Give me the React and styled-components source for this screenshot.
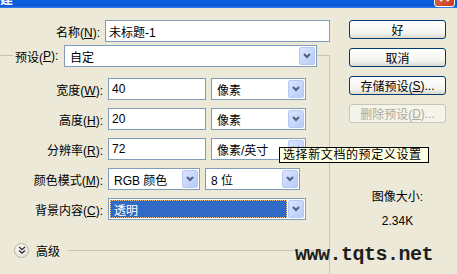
import React from 'react';
import styled, { createGlobalStyle } from 'styled-components';

const GlobalStyle = createGlobalStyle`
    html, body {
        margin: 0;
        padding: 0;
        background: #ece9d8;
    }
`;

const cjk = `"Liberation Sans", "Noto Sans CJK SC", sans-serif`;
const lineColor = '#c8c5b4';

const Chevron = () => (
    <svg width="8" height="6" viewBox="0 0 8 6">
        <polyline points="1,1 4,4 7,1" fill="none" stroke="#4d6185" strokeWidth="2" />
    </svg>
);

const DoubleChevron = () => (
    <svg width="8" height="8" viewBox="0 0 8 8">
        <polyline points="1,1 4,3.5 7,1" fill="none" stroke="#333" strokeWidth="1.4" />
        <polyline points="1,4.5 4,7 7,4.5" fill="none" stroke="#333" strokeWidth="1.4" />
    </svg>
);

const Select = ({ width, value, selected }) => (
    <StyledSelect width={width}>
        <SelectValue selected={selected}>{value}</SelectValue>
        <DropButton><Chevron /></DropButton>
    </StyledSelect>
);

const FieldRow = ({ label, children }) => (
    <Row>
        <Label>{label}</Label>
        {children}
    </Row>
);

const App = () => {
    return (
        <Window>
            <GlobalStyle />
            <TitleBar>
                <TitleText>新建</TitleText>
                <CloseButton>×</CloseButton>
            </TitleBar>
            <Body>
                <FormColumn>
                    <FieldRow label={<>名称(<u>N</u>):</>}>
                        <TextInput width={225}>未标题-1</TextInput>
                    </FieldRow>
                    <PresetRow>
                        <GroupEdge width={13} />
                        <PresetLabel>预设(<u>P</u>):</PresetLabel>
                        <Select width={253} value="自定" />
                        <GroupEdge corner />
                    </PresetRow>
                    <Group>
                        <FieldRow label={<>宽度(<u>W</u>):</>}>
                            <TextInput width={98}>40</TextInput>
                            <Select width={95} value="像素" />
                        </FieldRow>
                        <FieldRow label={<>高度(<u>H</u>):</>}>
                            <TextInput width={98}>20</TextInput>
                            <Select width={95} value="像素" />
                        </FieldRow>
                        <FieldRow label={<>分辨率(<u>R</u>):</>}>
                            <TextInput width={98}>72</TextInput>
                            <Select width={95} value="像素/英寸" />
                        </FieldRow>
                        <FieldRow label={<>颜色模式(<u>M</u>):</>}>
                            <Select width={92} value="RGB 颜色" />
                            <Select width={95} value="8 位" />
                        </FieldRow>
                        <FieldRow label={<>背景内容(<u>C</u>):</>}>
                            <Select width={198} value="透明" selected />
                        </FieldRow>
                        <AdvancedRow>
                            <RoundToggle><DoubleChevron /></RoundToggle>
                            <span>高级</span>
                            <Rule />
                        </AdvancedRow>
                    </Group>
                </FormColumn>
                <SideColumn>
                    <Button>好</Button>
                    <Button>取消</Button>
                    <Button>存储预设(<u>S</u>)...</Button>
                    <Button disabled>删除预设(<u>D</u>)...</Button>
                    <InfoLabel>图像大小:</InfoLabel>
                    <InfoValue>2.34K</InfoValue>
                </SideColumn>
            </Body>
            <Tooltip>选择新文档的预定义设置</Tooltip>
            <Watermark>www.tqts.net</Watermark>
        </Window>
    );
};

export default App;

const Window = styled.div`
    position: relative;
    width: 457px;
    height: 274px;
    overflow: hidden;
    background: #ece9d8;
    font-family: ${cjk};
    font-size: 12px;
    color: #000;
    display: flex;
    flex-direction: column;
`;

const TitleBar = styled.div`
    height: 8px;
    flex: none;
    display: flex;
    align-items: flex-end;
    justify-content: space-between;
    overflow: hidden;
    background: linear-gradient(#0a5fe0, #0a56d6 75%, #3d86f0);
`;

const TitleText = styled.span`
    color: #fff;
    font-weight: bold;
    font-size: 13px;
    line-height: 13px;
    margin-left: -13px;
    margin-bottom: 3px;
`;

const CloseButton = styled.div`
    width: 21px;
    height: 21px;
    margin-right: 2px;
    margin-bottom: 1px;
    flex: none;
    border-radius: 3px;
    border: 1px solid #fff;
    box-sizing: border-box;
    background: linear-gradient(135deg, #e8795a, #c8381a);
    color: #fff;
    font: bold 16px/19px "DejaVu Sans", sans-serif;
    text-align: center;
`;

const Body = styled.div`
    flex: 1;
    display: grid;
    grid-template-columns: 330px 1fr;
`;

const FormColumn = styled.div`
    display: flex;
    flex-direction: column;
    padding-top: 12px;
`;

const Row = styled.div`
    display: flex;
    align-items: center;
    height: 22px;
    gap: 5px;
`;

const Label = styled.div`
    width: 103px;
    text-align: right;
    white-space: nowrap;
`;

const TextInput = styled.div`
    width: ${props => props.width}px;
    height: 22px;
    box-sizing: border-box;
    border: 1px solid #7f9db9;
    background: #fff;
    padding-left: 3px;
    display: flex;
    align-items: center;
    flex: none;
`;

const StyledSelect = styled.div`
    width: ${props => props.width}px;
    height: 22px;
    box-sizing: border-box;
    border: 1px solid #7f9db9;
    background: #fff;
    padding: 1px;
    display: flex;
    flex: none;
`;

const SelectValue = styled.div`
    flex: 1;
    display: flex;
    align-items: center;
    padding-left: 4px;
    margin-right: 1px;
    color: ${props => props.selected ? '#fff' : '#000'};
    background: ${props => props.selected ? '#316ac5' : 'transparent'};
    outline: ${props => props.selected ? '1px dotted #f0c080' : 'none'};
    outline-offset: -1px;
`;

const DropButton = styled.div`
    width: 16px;
    box-sizing: border-box;
    border: 1px solid #b5c8f5;
    border-radius: 2px;
    background: linear-gradient(135deg, #d9e4fd, #b9cbf8);
    display: flex;
    align-items: center;
    justify-content: center;
`;

const PresetRow = styled.div`
    display: flex;
    height: 22px;
    margin-top: 3px;
`;

const GroupEdge = styled.div`
    align-self: flex-end;
    height: 11px;
    width: ${props => props.width ? `${props.width}px` : 'auto'};
    flex: ${props => props.corner ? 1 : 'none'};
    border-top: 1px solid ${lineColor};
    border-right: ${props => props.corner ? `1px solid ${lineColor}` : 'none'};
`;

const PresetLabel = styled.div`
    display: flex;
    align-items: center;
    padding: 0 5px 0 2px;
    width: 44px;
    white-space: nowrap;
`;

const Group = styled.div`
    flex: 1;
    border-right: 1px solid ${lineColor};
    display: flex;
    flex-direction: column;
    gap: 8px;
    padding-top: 11px;
`;

const AdvancedRow = styled.div`
    display: flex;
    align-items: center;
    gap: 7px;
    height: 16px;
    margin-top: 14px;
    padding-left: 14px;
`;

const RoundToggle = styled.div`
    width: 13px;
    height: 13px;
    border-radius: 50%;
    border: 1px solid #b8b4a4;
    background: radial-gradient(circle at 40% 35%, #ffffff, #ddd9cc);
    display: flex;
    align-items: center;
    justify-content: center;
`;

const Rule = styled.div`
    flex: 1;
    height: 1px;
    margin-left: 1px;
    background: ${lineColor};
`;

const SideColumn = styled.div`
    display: flex;
    flex-direction: column;
    align-items: center;
    padding: 12px 10px 0 19px;
    width: 97px;
`;

const Button = styled.div`
    width: 97px;
    height: 19px;
    box-sizing: border-box;
    margin-bottom: 9px;
    border: 1px solid ${props => props.disabled ? '#c9c7ba' : '#003c74'};
    border-radius: 3px;
    background: ${props => props.disabled
        ? '#f5f4ea'
        : 'linear-gradient(#ffffff, #f3f3ef 70%, #dcd8cc)'};
    color: ${props => props.disabled ? '#aca899' : '#000'};
    display: flex;
    align-items: center;
    justify-content: center;
    white-space: nowrap;
    u {
        text-decoration: underline;
    }
`;

const InfoLabel = styled.div`
    margin-top: 58px;
    line-height: 14px;
`;

const InfoValue = styled.div`
    margin-top: 10px;
    line-height: 14px;
`;

const Tooltip = styled.div`
    position: absolute;
    left: 279px;
    top: 147px;
    height: 16px;
    box-sizing: border-box;
    padding: 0 6px 0 3px;
    background: #ffffe1;
    border: 1px solid #000;
    line-height: 14px;
    letter-spacing: 0.6px;
    white-space: nowrap;
`;

const Watermark = styled.div`
    position: absolute;
    left: 295px;
    top: 245px;
    font-family: "Liberation Mono", monospace;
    font-weight: bold;
    font-size: 20px;
    line-height: 20px;
    letter-spacing: -0.5px;
    color: #1e1e1e;
`;
